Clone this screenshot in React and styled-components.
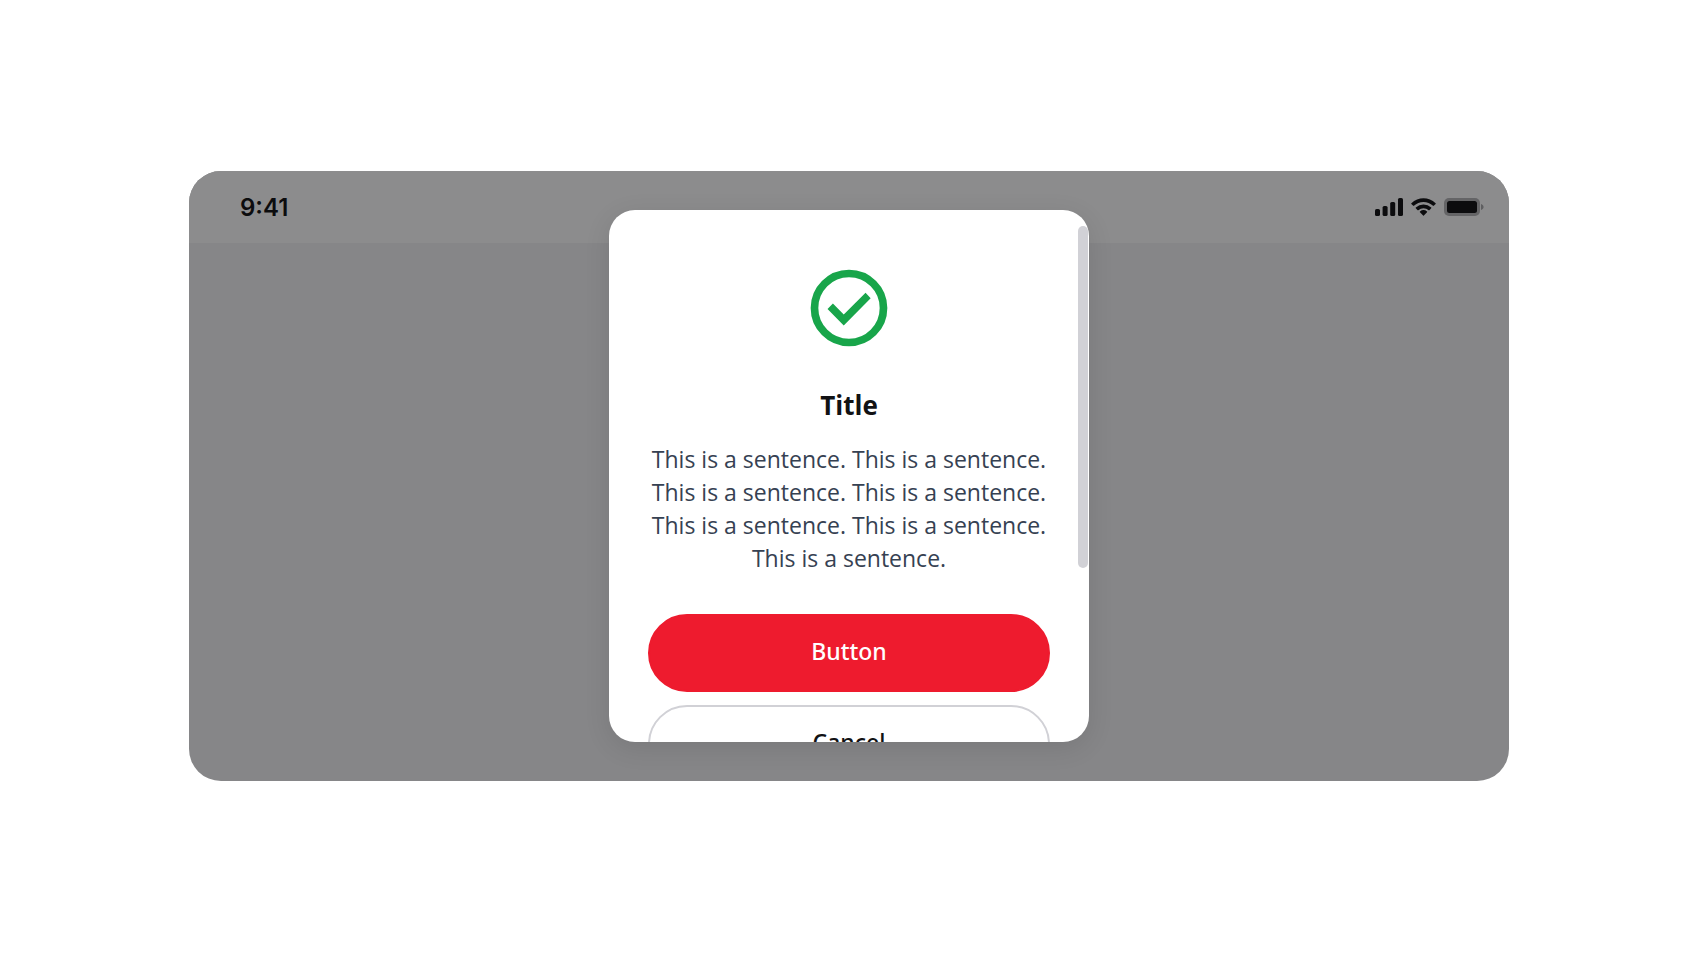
import React from "react";
import styled, { createGlobalStyle } from "styled-components";

const sentence = "This is a sentence.";
const message = Array(7).fill(sentence).join(" ");

export default function App() {
  return (
    <>
      <GlobalStyle />
      <Page>
        <Screen>
          <StatusBar />
          <Modal />
        </Screen>
      </Page>
    </>
  );
}

function StatusBar() {
  return (
    <StatusWrapper>
      <Time>9:41</Time>
      <StatusIcons>
        <svg width="28" height="18" viewBox="0 0 28 18" fill="currentColor">
          <rect x="0" y="11" width="5" height="7" rx="1.6" />
          <rect x="7.6" y="8" width="5" height="10" rx="1.6" />
          <rect x="15.2" y="4" width="5" height="14" rx="1.6" />
          <rect x="23" y="0" width="5" height="18" rx="1.6" />
        </svg>
        <svg width="25" height="18" viewBox="0 0 17 12" fill="currentColor">
          <path d="M8.5 2.6c2.4 0 4.7.9 6.5 2.6.13.13.35.13.48 0l1.26-1.3a.36.36 0 0 0 0-.52C12.1-.95 4.9-.95.26 3.38a.36.36 0 0 0 0 .52l1.26 1.3c.13.13.34.13.48 0A9.5 9.5 0 0 1 8.5 2.6Z" />
          <path d="M8.5 6.8c1.3 0 2.55.5 3.5 1.36.14.13.35.13.48 0l1.26-1.3a.36.36 0 0 0 0-.53 7.7 7.7 0 0 0-10.48 0 .36.36 0 0 0 0 .53l1.26 1.3c.13.13.35.13.48 0A5.3 5.3 0 0 1 8.5 6.8Z" />
          <path d="M11 9.3a.35.35 0 0 1-.1.26L8.74 11.8a.34.34 0 0 1-.49 0L6.1 9.57a.35.35 0 0 1 0-.52 3.8 3.8 0 0 1 4.8 0 .35.35 0 0 1 .1.25Z" />
        </svg>
        <svg width="40" height="18" viewBox="0 0 40 18" fill="currentColor">
          <rect width="36" height="18" rx="5" fill="#646466" />
          <rect x="3" y="3" width="30" height="12" rx="2.5" />
          <path d="M37 6c1.5.5 2.6 1.7 2.6 3s-1.1 2.5-2.6 3Z" fill="#5e5e60" />
        </svg>
      </StatusIcons>
    </StatusWrapper>
  );
}

function Modal() {
  return (
    <ModalWrapper role="dialog" aria-labelledby="modal-title">
      <ModalBody>
        <CheckIcon viewBox="0 0 24 24" aria-hidden="true">
          <circle cx="12" cy="12" r="9" fill="none" stroke="currentColor" strokeWidth="2" />
          <path
            d="M6.4 12.25 7.8 10.85 10.63 13.7 16.32 8.05 17.65 9.45 10.63 16.56Z"
            fill="currentColor"
          />
        </CheckIcon>
        <Title id="modal-title">Title</Title>
        <Message>{message}</Message>
        <Actions>
          <Button type="button" $primary>
            Button
          </Button>
          <Button type="button">Cancel</Button>
        </Actions>
      </ModalBody>
      <ScrollThumb />
    </ModalWrapper>
  );
}

const GlobalStyle = createGlobalStyle`
  * {
    box-sizing: border-box;
  }
  body {
    margin: 0;
    background: #fff;
    font-family: "Open Sans", "Noto Sans", sans-serif;
  }
`;

const Page = styled.main`
  display: flex;
  flex-direction: column;
  justify-content: center;
  min-height: 100vh;
  padding: 0 191px 4px 189px;
`;

/* status bar and modal share one grid cell, the modal on top */
const Screen = styled.section`
  display: grid;
  border-radius: 32px;
  background: #868688;
  overflow: hidden;

  > * {
    grid-area: 1 / 1;
  }
`;

const StatusWrapper = styled.header`
  display: flex;
  justify-content: space-between;
  align-items: center;
  align-self: start;
  height: 72px;
  padding: 0 25px 0 51px;
  background: #8c8c8d;
  color: #0c0c0e;
`;

const Time = styled.span`
  font-family: Inter, sans-serif;
  font-size: 24px;
  font-weight: 600;
`;

const StatusIcons = styled.div`
  display: flex;
  align-items: center;
  gap: 8px;
`;

const ModalWrapper = styled.div`
  position: relative;
  justify-self: center;
  width: 480px;
  max-width: 100%;
  height: 532px;
  margin: 39px 0;
  border-radius: 26px;
  background: #fff;
  box-shadow: 0 6px 26px rgba(0, 0, 0, 0.1);
  overflow: hidden;
`;

const ModalBody = styled.div`
  display: flex;
  flex-direction: column;
  align-items: center;
  padding: 52px 39px;
  text-align: center;
`;

const CheckIcon = styled.svg`
  width: 92px;
  height: 92px;
  color: #18a54a;
`;

const Title = styled.h1`
  margin: 31px 0 18px;
  color: #111214;
  font-size: 26px;
  font-weight: 700;
  line-height: 40px;
`;

const Message = styled.p`
  margin: 0 0 39px;
  color: #364152;
  font-size: 23px;
  line-height: 33px;
`;

const Actions = styled.div`
  display: flex;
  flex-direction: column;
  gap: 13px;
  width: 100%;
`;

const Button = styled.button`
  height: 78px;
  padding: 0 0 4px;
  border: 2px solid ${({ $primary }) => ($primary ? "#ee1b2e" : "#d1d1d6")};
  border-radius: 39px;
  background: ${({ $primary }) => ($primary ? "#ee1b2e" : "#fff")};
  color: ${({ $primary }) => ($primary ? "#fff" : "#111214")};
  font-family: "Noto Sans", sans-serif;
  font-size: 23px;
  font-weight: 500;
  cursor: pointer;
`;

const ScrollThumb = styled.div`
  position: absolute;
  top: 16px;
  right: 1px;
  width: 10px;
  height: 342px;
  border-radius: 5px;
  background: #d1d1d6;
`;
